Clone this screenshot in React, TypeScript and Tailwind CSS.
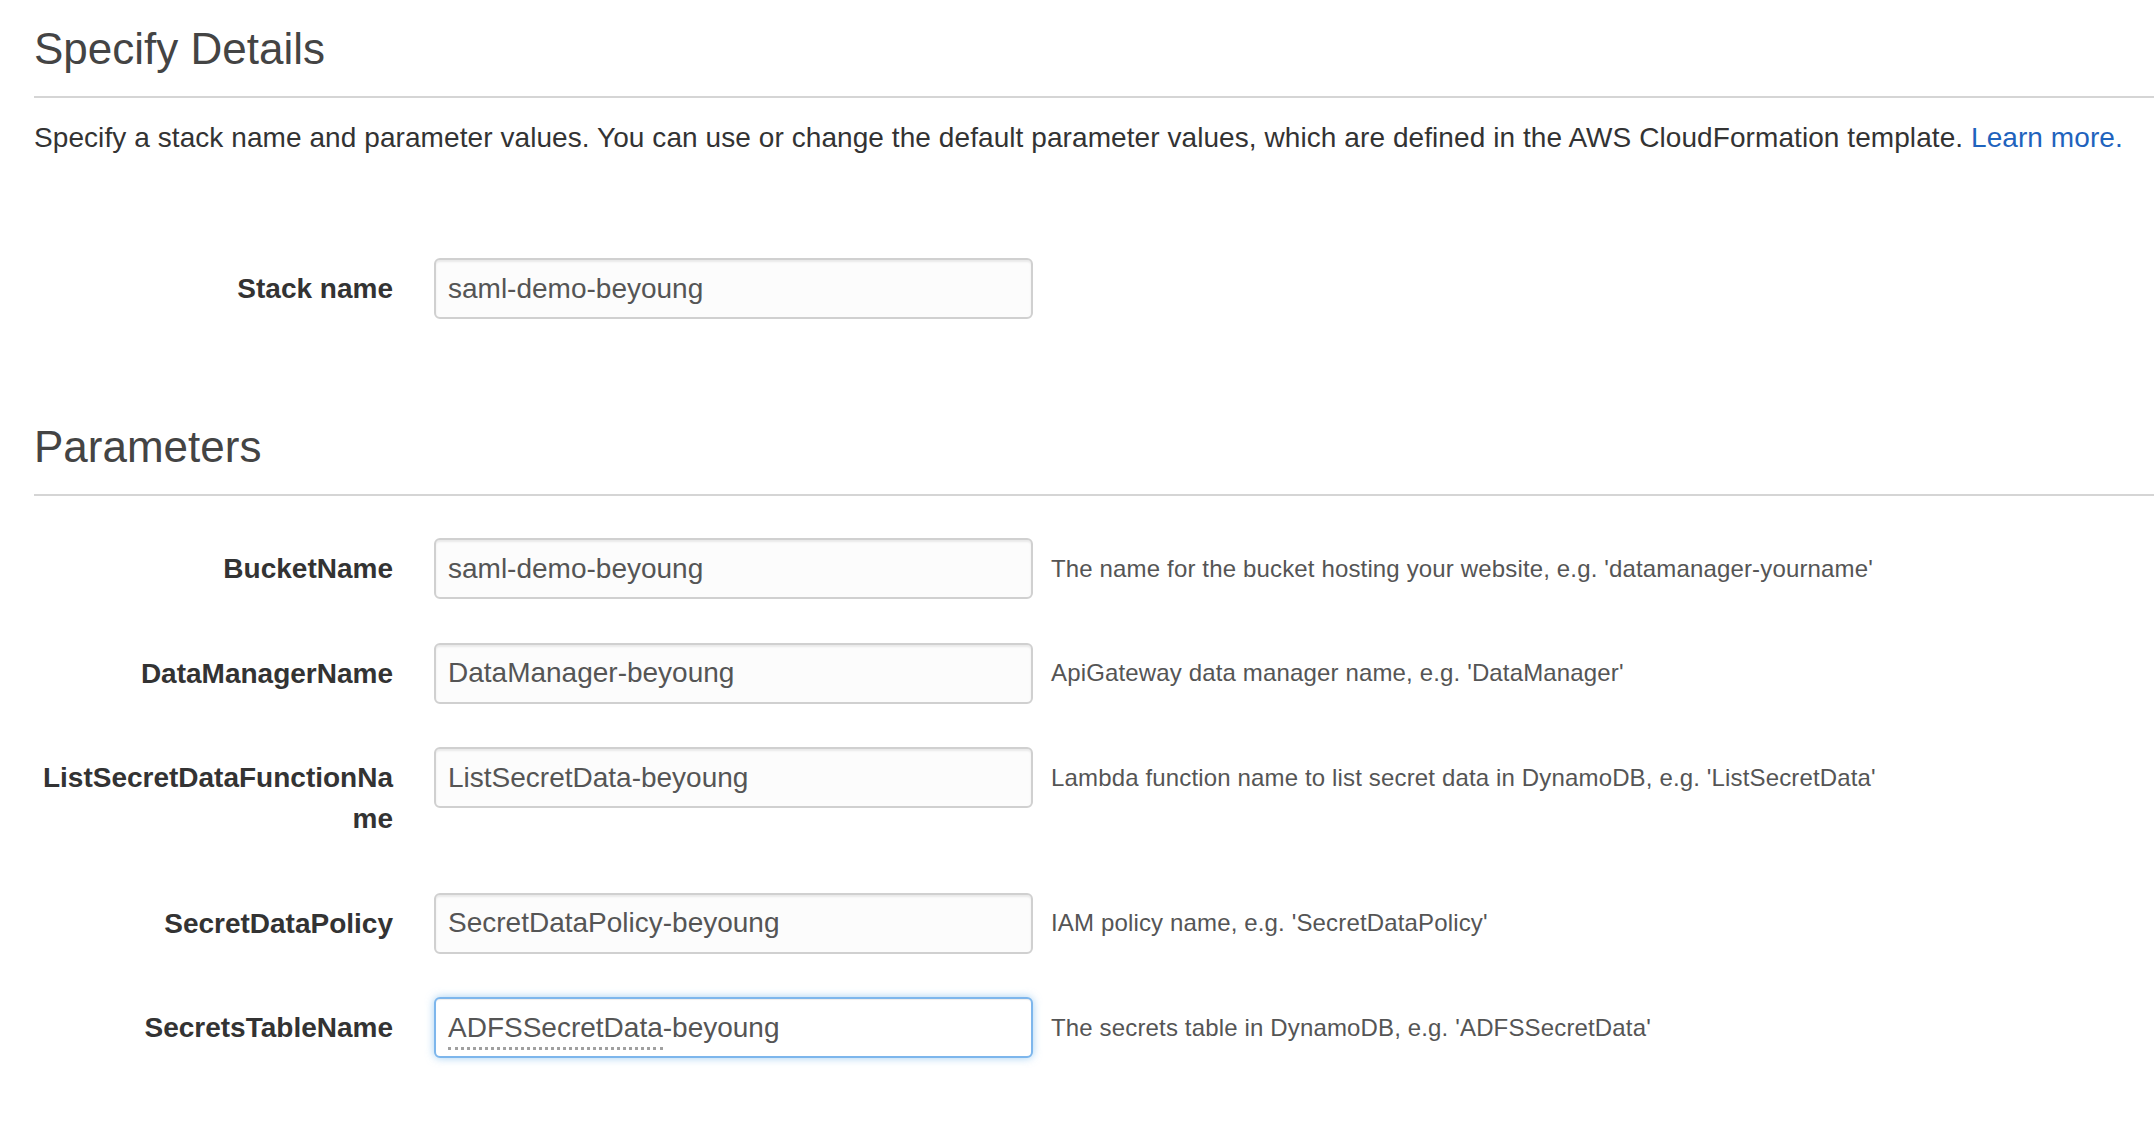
import React from "react";

type Param = {
  label: string;
  value: string;
  help: string;
};

const params: Param[] = [
  {
    label: "BucketName",
    value: "saml-demo-beyoung",
    help: "The name for the bucket hosting your website, e.g. 'datamanager-yourname'",
  },
  {
    label: "DataManagerName",
    value: "DataManager-beyoung",
    help: "ApiGateway data manager name, e.g. 'DataManager'",
  },
  {
    label: "ListSecretDataFunctionName",
    value: "ListSecretData-beyoung",
    help: "Lambda function name to list secret data in DynamoDB, e.g. 'ListSecretData'",
  },
  {
    label: "SecretDataPolicy",
    value: "SecretDataPolicy-beyoung",
    help: "IAM policy name, e.g. 'SecretDataPolicy'",
  },
];

const inputClass =
  "w-[599px] h-[61px] shrink-0 rounded-[6px] border-2 border-[#d0d0d0] bg-[#fcfcfc] pl-[12px] text-[28px] text-[#555] shadow-[inset_0_2px_2px_rgba(0,0,0,0.075)] outline-none";

const Label = ({ text }: { text: string }) => (
  <label className="w-[359px] shrink-0 pt-[10px] pb-[10px] text-right text-[28px] leading-[41px] font-bold text-[#333] break-all">
    {text}
  </label>
);

const Help = ({ text }: { text: string }) => (
  <div className="h-[61px] ml-[18px] flex items-center text-[24px] tracking-[0.15px] text-[#555] whitespace-nowrap">
    {text}
  </div>
);

export default function App() {
  return (
    <div className="min-h-screen bg-white pl-[34px] font-['Liberation_Sans',Arial,sans-serif]">
      <h2 className="pt-[25px] pb-[23px] border-b-2 border-[#d5d5d5] text-[44px] leading-[48px] text-[#444]">
        Specify Details
      </h2>
      <p className="mt-[20px] text-[28px] leading-[40px] tracking-[0.075px] text-[#333] whitespace-nowrap">
        Specify a stack name and parameter values. You can use or change the
        default parameter values, which are defined in the AWS CloudFormation
        template.{" "}
        <a href="#" className="text-[#1f63bd]">
          Learn more.
        </a>
      </p>

      <div className="mt-[100px] flex items-start">
        <Label text="Stack name" />
        <input
          className={`ml-[41px] ${inputClass}`}
          defaultValue="saml-demo-beyoung"
        />
      </div>

      <h2 className="mt-[79px] pt-[25px] pb-[23px] border-b-2 border-[#d5d5d5] text-[44px] leading-[48px] text-[#444]">
        Parameters
      </h2>

      <div className="mt-[42px] flex flex-col gap-[43.5px]">
        {params.map((p) => (
          <div key={p.label} className="flex items-start">
            <Label text={p.label} />
            <input className={`ml-[41px] ${inputClass}`} defaultValue={p.value} />
            <Help text={p.help} />
          </div>
        ))}
        <div className="flex items-start">
          <Label text="SecretsTableName" />
          <div
            role="textbox"
            className="ml-[41px] w-[599px] h-[61px] shrink-0 rounded-[6px] border-2 border-[#7db6ec] bg-white pl-[12px] flex items-center text-[28px] text-[#555] shadow-[inset_0_1px_1px_rgba(0,0,0,0.075),0_0_8px_rgba(102,175,233,0.6)]"
          >
            <span className="relative">
              ADFSSecretData
              <span className="absolute left-0 right-0 bottom-[-1px] h-[3px] border-b-[3px] border-dotted border-[#a0a0a0]" />
            </span>
            <span>-beyoung</span>
          </div>
          <Help text="The secrets table in DynamoDB, e.g. 'ADFSSecretData'" />
        </div>
      </div>
    </div>
  );
}
